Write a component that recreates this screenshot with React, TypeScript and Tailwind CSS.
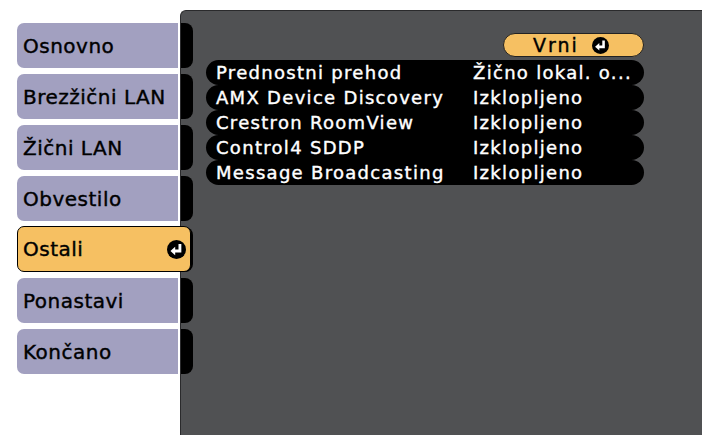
import React from 'react'

const tabs = ['Osnovno', 'Brezžični LAN', 'Žični LAN', 'Obvestilo', 'Ostali', 'Ponastavi', 'Končano']

const rows = [
  ['Prednostni prehod', 'Žično lokal. o...'],
  ['AMX Device Discovery', 'Izklopljeno'],
  ['Crestron RoomView', 'Izklopljeno'],
  ['Control4 SDDP', 'Izklopljeno'],
  ['Message Broadcasting', 'Izklopljeno'],
]

function EnterIcon({ size }: { size: number }) {
  return (
    <svg width={size} height={size} viewBox="0 0 20 20">
      <circle cx="10" cy="10" r="10" fill="#000" />
      <path d="M13.6 4.2 V11.6 H7" stroke="#fff" strokeWidth="3" fill="none" />
      <path d="M3.6 11.6 L8.6 7.2 V16 Z" fill="#fff" />
    </svg>
  )
}

export default function App() {
  return (
    <div
      className="w-[702px] h-[435px] bg-white flex overflow-hidden"
      style={{ fontFamily: '"DejaVu Sans", sans-serif' }}
    >
      {/* left tabs */}
      <div className="w-[180px] shrink-0 pt-[23px] pl-[17px] flex flex-col gap-[6px]">
        {tabs.map((t) =>
          t === 'Ostali' ? (
            <div
              key={t}
              className="relative z-10 w-[174px] h-[46px] -mt-[1px] bg-[#f6c062] border border-black rounded-[7px] flex items-center justify-between pl-[5px] pr-[4px] text-[20px] text-black tracking-[0.5px] [-webkit-text-stroke:0.4px_black]"
            >
              <span>{t}</span>
              <EnterIcon size={19} />
            </div>
          ) : (
            <div
              key={t}
              className="w-[161px] h-[45px] bg-[#a2a0c0] rounded-l-[7px] flex items-center pl-[6px] text-[20px] text-black tracking-[0.5px] [-webkit-text-stroke:0.4px_black]"
            >
              {t}
            </div>
          )
        )}
      </div>

      {/* main panel */}
      <div className="flex-1 mt-[10px] bg-[#505153] rounded-tl-[6px] border-t border-l border-[#2a2a2c] flex">
        <div className="w-[12px] shrink-0 pt-[12px] flex flex-col gap-[6px]">
          {tabs.map((t) => (
            <div key={t} className="h-[45px] bg-black rounded-r-[8px]" />
          ))}
        </div>

        <div className="ml-[13px] w-[438px] pt-[22px]">
          <div className="flex justify-end">
            <div className="w-[141px] h-[24px] bg-[#f6c062] border border-[#222] rounded-full flex items-center gap-[13px] pl-[29px] text-[19px] text-black tracking-[2px] [-webkit-text-stroke:0.4px_black]">
              <span>Vrni</span>
              <EnterIcon size={17} />
            </div>
          </div>
          <div className="mt-[3px] flex flex-col">
            {rows.map(([a, b]) => (
              <div
                key={a}
                className="h-[25px] bg-black rounded-full flex items-center text-white text-[18px] tracking-[1.3px] leading-none [-webkit-text-stroke:0.4px_white]"
              >
                <span className="w-[267px] pl-[10px] whitespace-nowrap">{a}</span>
                <span className="whitespace-nowrap">{b}</span>
              </div>
            ))}
          </div>
        </div>
      </div>
    </div>
  )
}
